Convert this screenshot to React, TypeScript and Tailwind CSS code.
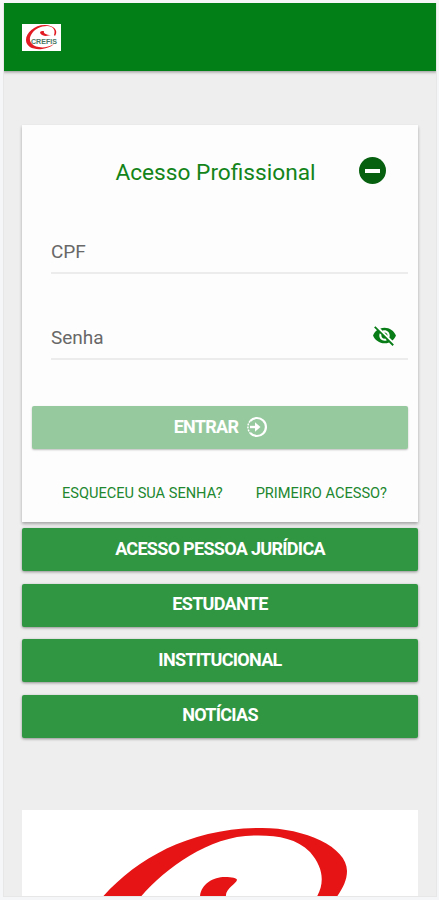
import React, { useState } from "react";

const menuItems = [
  "Acesso Pessoa Jurídica",
  "Estudante",
  "Institucional",
  "Notícias",
];

const SmallLogo = () => (
  <svg className="h-[27px] w-[39px] bg-white" viewBox="0 0 39 27">
    <path
      d="M33 12C37 6 31 1 23 1C12 1 4 9 4 16C4 23 12 26 20 25C25 24 29 23 32 20C27 23 21 24 17 23C9 22 6 16 9 11C12 5 19 2 25 2C31 2 34 6 32 11Z"
      fill="#e21a22"
    />
    <path d="M18 9C18 7 20 7 22 7C21 9 24 11 29 11C25 12 21 13 18 9Z" fill="#e21a22" />
    <text
      x="9"
      y="19.5"
      textLength="26"
      lengthAdjust="spacingAndGlyphs"
      fontFamily="Liberation Sans, sans-serif"
      fontSize="8"
      fontWeight="700"
      fill="#4b7764"
    >
      CREFIS
    </text>
  </svg>
);

const BigLogo = () => (
  <svg className="block h-[86px] w-full" viewBox="22 810 396 86" fill="#e61414">
    <path d="M103 896.5C138 858 190 828 262 828C305 828 347 847 347 871C347 880 343 888 337 896.5H317C325 882 323 867 310 852C296 838 277 835 254 835.5C208 836 165 869 141 896.5Z" />
    <path d="M200 896.5C201 884 213 877 225 877C232 877 237 878 237 880C236 884 225 889 226 896.5Z" />
  </svg>
);

const EyeOff = () => (
  <svg className="size-[25px]" viewBox="0 0 24 24" fill="#087d17">
    <path d="M12 7c2.76 0 5 2.24 5 5 0 .65-.13 1.26-.36 1.83l2.92 2.92c1.51-1.26 2.7-2.89 3.43-4.75-1.73-4.39-6-7.5-11-7.5-1.4 0-2.74.25-3.98.7l2.16 2.16C10.74 7.13 11.35 7 12 7zM2 4.27l2.28 2.28.46.46C3.08 8.3 1.78 10.02 1 12c1.73 4.39 6 7.5 11 7.5 1.55 0 3.03-.3 4.38-.84l.42.42L19.73 22 21 20.73 3.27 3 2 4.27zM7.53 9.8l1.55 1.55c-.05.21-.08.43-.08.65 0 1.66 1.34 3 3 3 .22 0 .44-.03.65-.08l1.55 1.55c-.67.33-1.41.53-2.2.53-2.76 0-5-2.24-5-5 0-.79.2-1.53.53-2.2zm4.31-.78l3.15 3.15.02-.16c0-1.66-1.34-3-3-3l-.17.01z" />
  </svg>
);

const LoginIcon = () => (
  <svg className="size-[22px]" viewBox="0 0 22 22" fill="none" stroke="white">
    <path d="M4.2 5A9 9 0 1 1 4.2 17" strokeWidth="2.2" />
    <path d="M4.2 5A9 9 0 0 0 4.2 17" strokeWidth="1.5" strokeDasharray="2 1" />
    <path d="M4 11H11" strokeWidth="2.4" />
    <path d="M9 6.2L14.5 11L9 15.8Z" fill="white" stroke="none" />
  </svg>
);

const App = () => {
  const [cpf, setCpf] = useState<string>("");
  const [password, setPassword] = useState<string>("");

  return (
    <div className="h-[900px] w-[439px] overflow-hidden bg-[#f5f6f7] pt-[3px] pr-[2px] pl-[3px] font-['Roboto',sans-serif]">
      <div className="h-[894px] overflow-hidden border-x border-b border-[#e7e7e7] bg-[#eeeeee]">
        <header className="-mx-px flex h-[68px] items-center bg-[#037f17] pl-[19px] shadow-[0_1px_3px_rgba(0,0,0,0.4)]">
          <SmallLogo />
        </header>

        <main className="px-[18px] pt-[54px]">
          <section className="h-[397px] bg-[#fdfdfd] px-[10px] shadow-[0_2px_3px_rgba(0,0,0,0.3)]">
            <div className="flex h-[91px] items-center justify-end pr-[22px]">
              <h1 className="w-[201px] pt-[6px] text-center text-[22.7px] whitespace-nowrap text-[#138419]">
                Acesso Profissional
              </h1>
              <button className="ml-[43px] flex size-[27px] items-center justify-center rounded-full bg-[#06600f]">
                <span className="h-1 w-[15px] bg-white" />
              </button>
            </div>
            <div className="ml-[19px] h-[58px] border-b-2 border-[#ececec]">
              <input
                className="h-[70px] w-full text-[19px] text-[#333] outline-none placeholder:text-[#686868]"
                placeholder="CPF"
                value={cpf}
                onChange={(e) => setCpf(e.target.value)}
              />
            </div>
            <div className="ml-[19px] flex h-[86px] items-center border-b-2 border-[#ececec] pt-[39px] pr-[11px]">
              <input
                type="password"
                className="h-10 min-w-0 flex-1 pt-[3px] text-[19px] text-[#333] outline-none placeholder:text-[#686868]"
                placeholder="Senha"
                value={password}
                onChange={(e) => setPassword(e.target.value)}
              />
              <EyeOff />
            </div>
            <button className="mt-[46px] flex h-[43px] w-full items-center justify-center gap-[8px] rounded-[2px] bg-[#96c99e] pb-px pl-[2px] text-[18px] font-bold tracking-[-0.7px] text-white shadow-[0_1px_2px_rgba(0,0,0,0.25)]">
              <span className="pb-px">ENTRAR</span>
              <LoginIcon />
            </button>
            <div className="mt-[34px] flex justify-between pr-[21px] pl-[30px] text-[14.6px] text-[#21872f]">
              <a href="#senha">ESQUECEU SUA SENHA?</a>
              <a href="#cadastro">PRIMEIRO ACESSO?</a>
            </div>
          </section>

          <nav className="mt-[6px] flex flex-col gap-[12.5px]">
            {menuItems.map((item) => (
              <button
                key={item}
                className="h-[43px] rounded-[2px] bg-[#309642] pb-[3px] text-[18px] font-bold tracking-[-0.7px] text-white uppercase shadow-[0_1px_3px_rgba(0,0,0,0.4)]"
              >
                {item}
              </button>
            ))}
          </nav>

          <div className="mt-[72.5px] bg-white">
            <BigLogo />
          </div>
        </main>
      </div>
    </div>
  );
};

export default App;
